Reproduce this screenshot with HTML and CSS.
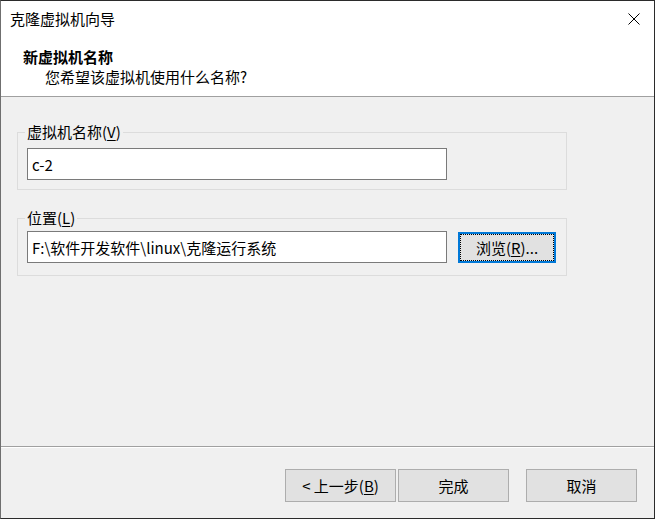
FILE: index.html
```html
<!DOCTYPE html>
<html lang="zh-CN">
<head>
    <meta charset="UTF-8">
    <meta name="viewport" content="width=device-width, initial-scale=1.0">
    <title>克隆虚拟机向导</title>
    <link rel="stylesheet" href="styles.css">
</head>
<body>
    <div id="wizard">
        <div class="titlebar">
            <div class="title">克隆虚拟机向导</div>
            <div class="close-btn">
                <svg width="12" height="12" viewBox="0 0 12 12">
                    <path d="M0.5 0.5 L11.5 11.5 M11.5 0.5 L0.5 11.5" stroke="#000" stroke-width="1" fill="none"/>
                </svg>
            </div>
        </div>
        <div class="header">
            <div class="step-title">新虚拟机名称</div>
            <div class="step-desc">您希望该虚拟机使用什么名称?</div>
        </div>
        <div class="content">
            <fieldset class="group name-group">
                <legend>虚拟机名称(<u>V</u>)</legend>
                <input class="text-input" type="text" value="c-2">
            </fieldset>
            <fieldset class="group path-group">
                <legend>位置(<u>L</u>)</legend>
                <div class="path-row">
                    <input class="text-input" type="text" value="F:\软件开发软件\linux\克隆运行系统">
                    <div class="browse-btn">浏览(<u>R</u>)...</div>
                </div>
            </fieldset>
        </div>
        <div class="footer">
            <div class="btn back-btn">&lt; 上一步(<u>B</u>)</div>
            <div class="btn finish-btn">完成</div>
            <div class="btn cancel-btn">取消</div>
        </div>
    </div>
</body>
</html>
```

FILE: styles.css
```css
* {
    box-sizing: border-box;
}
body {
    margin: 0;
    padding: 0;
    font-family: "Noto Sans CJK SC", "Microsoft YaHei", sans-serif;
    font-size: 15px;
    color: #000;
}
#wizard {
    width: 655px;
    height: 519px;
    display: flex;
    flex-direction: column;
    background-color: #f0f0f0;
    border: 1px solid #2b2b2b;
    border-left-color: #6f6f6f;
}
.titlebar {
    height: 30px;
    display: flex;
    justify-content: space-between;
    align-items: flex-start;
    background-color: white;
    padding: 8px 14px 0 9px;
}
.titlebar .title {
    line-height: 20px;
}
.titlebar .close-btn {
    margin-top: 4px;
    width: 12px;
    height: 12px;
}
.titlebar .close-btn svg {
    display: block;
}
.header {
    background-color: white;
    padding: 16px 0 9px 22px;
    border-bottom: 1px solid #a0a0a0;
}
.header .step-title {
    font-weight: bold;
    line-height: 20px;
}
.header .step-desc {
    line-height: 20px;
    padding-left: 22px;
}
.content {
    flex: 1;
    padding: 25px 0 0 16px;
}
.group {
    width: 550px;
    margin: 0;
    border: 1px solid #dcdcdc;
    padding: 6px 9px 9px 9px;
    min-width: 0;
}
.group legend {
    padding: 0 2px;
    margin-left: -2px;
    line-height: 20px;
}
.path-group {
    margin-top: 18px;
    padding-top: 3px;
    padding-bottom: 12px;
}
.text-input {
    display: block;
    width: 420px;
    height: 32px;
    margin: 0;
    border: 1px solid #7a7a7a;
    background-color: white;
    padding: 0 4px;
    font-family: inherit;
    font-size: 15px;
    color: #000;
    outline: none;
}
.path-row {
    display: flex;
    gap: 11px;
}
.browse-btn {
    width: 98px;
    height: 31px;
    margin-top: 1px;
    border: 2px solid #0078d7;
    background-color: #e1e1e1;
    outline: 1px dotted #000;
    outline-offset: -3px;
    display: flex;
    align-items: center;
    justify-content: center;
    line-height: 20px;
}
.footer {
    height: 72px;
    border-top: 1px solid #a0a0a0;
    box-shadow: inset 0 1px 0 #ffffff;
    padding: 22px 17px 0 0;
    display: flex;
    justify-content: flex-end;
}
.footer .btn {
    width: 111px;
    height: 33px;
    border: 1px solid #adadad;
    background-color: #e1e1e1;
    display: flex;
    align-items: center;
    justify-content: center;
    line-height: 20px;
}
.footer .finish-btn {
    margin-left: 2px;
}
.footer .cancel-btn {
    margin-left: 17px;
}
u {
    text-underline-offset: 2px;
}
```
